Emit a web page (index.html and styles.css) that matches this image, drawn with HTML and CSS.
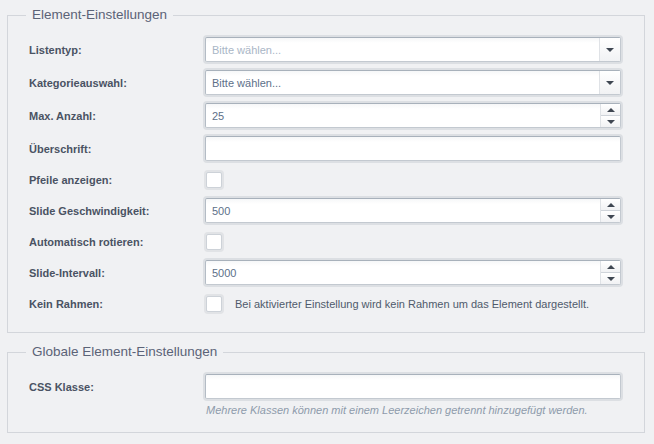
FILE: index.html
```html
<!DOCTYPE html>
<html lang="de">
<head>
<meta charset="utf-8">
<title>Element-Einstellungen</title>
<link rel="stylesheet" href="styles.css">
</head>
<body>
<div class="page">
  <fieldset class="group">
    <legend>Element-Einstellungen</legend>
    <div class="row">
      <label>Listentyp:</label>
      <div class="field">
        <span class="value placeholder">Bitte wählen...</span>
        <span class="select-btn"><span class="tri-down"></span></span>
      </div>
    </div>
    <div class="row">
      <label>Kategorieauswahl:</label>
      <div class="field">
        <span class="value">Bitte wählen...</span>
        <span class="select-btn"><span class="tri-down"></span></span>
      </div>
    </div>
    <div class="row">
      <label>Max. Anzahl:</label>
      <div class="field">
        <span class="value">25</span>
        <span class="spin"><span class="spin-up"><span class="tri-up"></span></span><span class="spin-down"><span class="tri-down"></span></span></span>
      </div>
    </div>
    <div class="row">
      <label>Überschrift:</label>
      <div class="field"><span class="value"></span></div>
    </div>
    <div class="row row-check">
      <label>Pfeile anzeigen:</label>
      <div class="check-wrap"><span class="checkbox"></span></div>
    </div>
    <div class="row">
      <label>Slide Geschwindigkeit:</label>
      <div class="field">
        <span class="value">500</span>
        <span class="spin"><span class="spin-up"><span class="tri-up"></span></span><span class="spin-down"><span class="tri-down"></span></span></span>
      </div>
    </div>
    <div class="row row-check">
      <label>Automatisch rotieren:</label>
      <div class="check-wrap"><span class="checkbox"></span></div>
    </div>
    <div class="row">
      <label>Slide-Intervall:</label>
      <div class="field">
        <span class="value">5000</span>
        <span class="spin"><span class="spin-up"><span class="tri-up"></span></span><span class="spin-down"><span class="tri-down"></span></span></span>
      </div>
    </div>
    <div class="row row-check">
      <label>Kein Rahmen:</label>
      <div class="check-wrap"><span class="checkbox"></span><span class="check-text">Bei aktivierter Einstellung wird kein Rahmen um das Element dargestellt.</span></div>
    </div>
  </fieldset>

  <fieldset class="group group-global">
    <legend>Globale Element-Einstellungen</legend>
    <div class="row">
      <label>CSS Klasse:</label>
      <div class="field"><span class="value"></span></div>
    </div>
    <div class="row row-hint">
      <span></span>
      <p class="hint">Mehrere Klassen können mit einem Leerzeichen getrennt hinzugefügt werden.</p>
    </div>
  </fieldset>
</div>
</body>
</html>
```

FILE: styles.css
```css
* { box-sizing: border-box; }
html, body {
  margin: 0;
  padding: 0;
  background: #f0f1f3;
}
body {
  font-family: "Liberation Sans", Arial, sans-serif;
  font-size: 11px;
  color: #4a5363;
}
.page {
  padding: 7px 9px 0 7px;
}
.group {
  margin: 0;
  border: 1px solid #d3d6db;
  padding: 14px 23px 18px 21px;
  min-width: 0;
}
.group legend {
  font-size: 13.5px;
  line-height: 16px;
  color: #5b6377;
  padding: 0 6px;
  margin-left: -3px;
}
.group-global {
  margin-top: 11px;
  padding-bottom: 15px;
}
.row {
  display: grid;
  grid-template-columns: 176px 1fr;
  align-items: center;
  margin-bottom: 8px;
}
.row:last-child { margin-bottom: 0; }
.row label {
  font-weight: bold;
  font-size: 11px;
  color: #4a5363;
}
.row-check { height: 21px; }
.field {
  position: relative;
  display: flex;
  align-items: center;
  height: 25px;
  background: linear-gradient(#f6f7f8 0, #ffffff 5px);
  border: 1px solid #c3c9d0;
  border-top-color: #a8b1bb;
  border-left-color: #b4bcc5;
  border-radius: 2px;
  box-shadow: 0 0 0 2px #dcdfe3;
}
.value {
  flex: 1;
  padding-left: 6px;
  font-size: 11px;
  color: #5d7089;
  white-space: nowrap;
}
.value.placeholder { color: #a9b6c6; }
.select-btn {
  width: 21px;
  align-self: stretch;
  display: flex;
  align-items: center;
  justify-content: center;
  border-left: 1px solid #dfe2e6;
  background: linear-gradient(#ffffff, #f1f2f4);
}
.spin {
  width: 20px;
  align-self: stretch;
  display: flex;
  flex-direction: column;
  border-left: 1px solid #dfe2e6;
}
.spin-up, .spin-down {
  flex: 1;
  display: flex;
  align-items: center;
  justify-content: center;
  background: linear-gradient(#ffffff, #f1f2f4);
}
.spin-up { border-bottom: 1px solid #cfd4da; }
.tri-down {
  width: 0;
  height: 0;
  border-left: 4px solid transparent;
  border-right: 4px solid transparent;
  border-top: 4px solid #3f4752;
}
.tri-up {
  width: 0;
  height: 0;
  border-left: 4px solid transparent;
  border-right: 4px solid transparent;
  border-bottom: 4px solid #3f4752;
}
.check-wrap {
  display: flex;
  align-items: center;
}
.checkbox {
  display: block;
  flex: none;
  width: 16px;
  height: 16px;
  margin-left: 1px;
  background: #ffffff;
  border: 1px solid #cdd2d8;
  border-radius: 2px;
  box-shadow: 0 0 0 2px #e1e3e6;
}
.check-text {
  margin-left: 13px;
  font-size: 11px;
  color: #4f5a6b;
  white-space: nowrap;
}
.row-hint { margin-top: -4px; }
.hint {
  margin: 0;
  padding-left: 1px;
  font-size: 11px;
  line-height: 14px;
  font-style: italic;
  color: #8e9bab;
}
```
